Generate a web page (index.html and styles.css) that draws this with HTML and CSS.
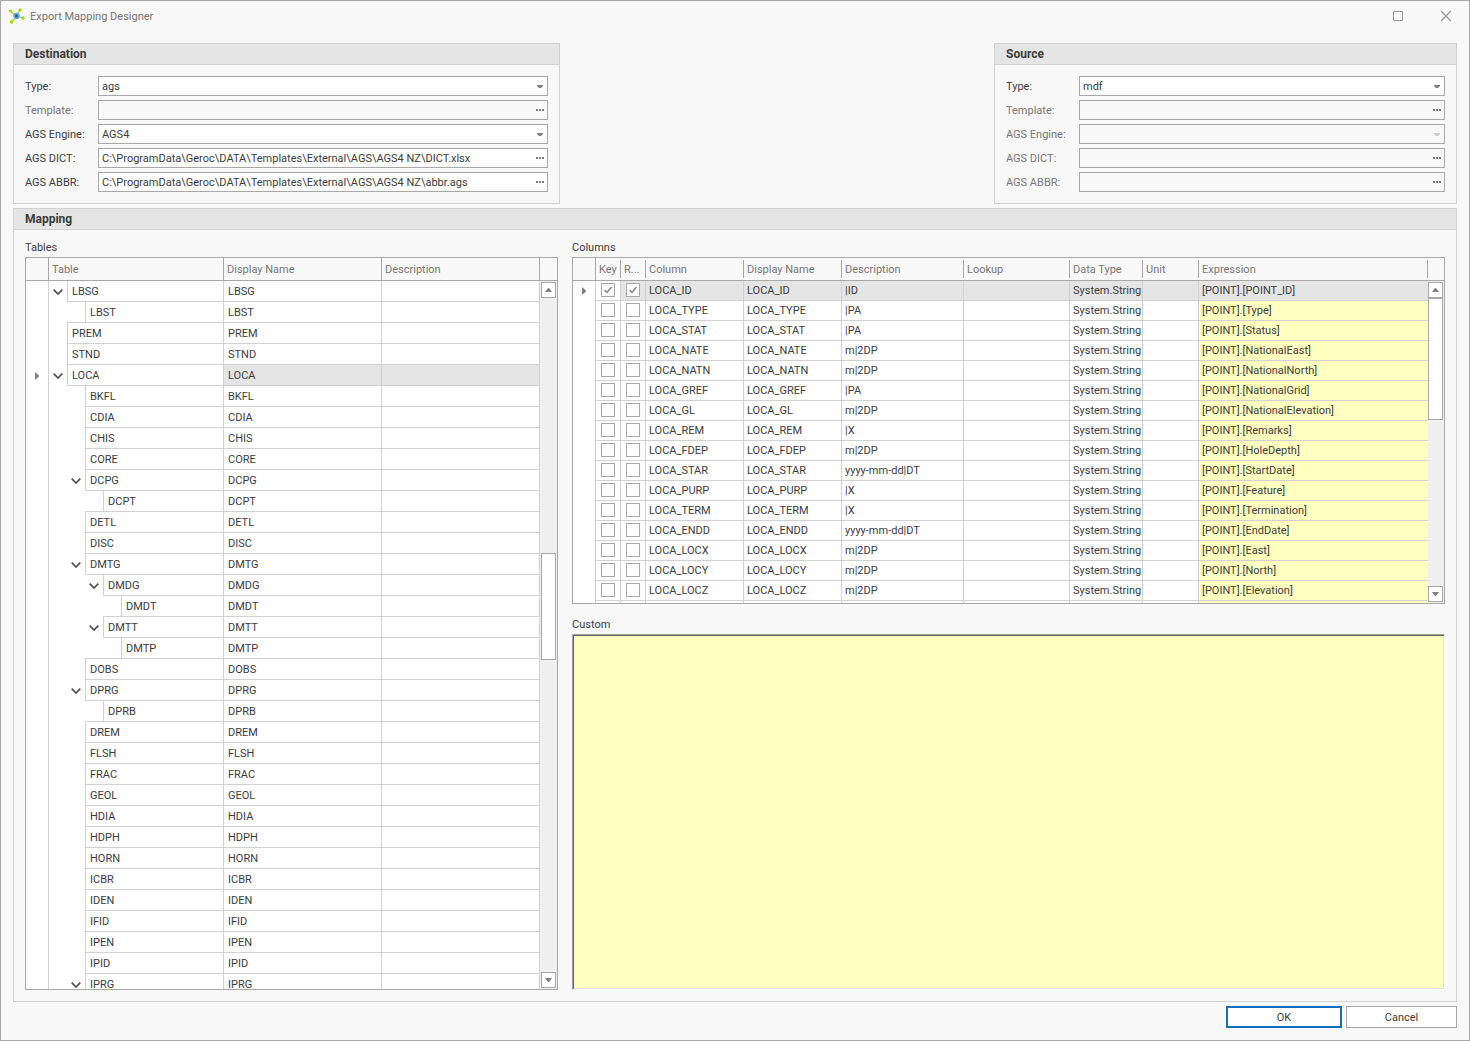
FILE: index.html
```html
<!DOCTYPE html>
<html lang="en">
<head>
<meta charset="utf-8">
<title>Export Mapping Designer</title>
<link rel="stylesheet" href="styles.css">
</head>
<body>
<svg class="defs" aria-hidden="true">
  <symbol id="caret" viewBox="0 0 6 3"><path d="M0 0h6v1L4 3H2L0 1z" fill="currentColor"/></symbol>
  <symbol id="dots" viewBox="0 0 8 2"><path d="M0 0h2v2H0zM3 0h2v2H3zM6 0h2v2H6z" fill="currentColor"/></symbol>
  <symbol id="up" viewBox="0 0 7 4"><path d="M3 0h1l3 4H0z" fill="currentColor"/></symbol>
  <symbol id="down" viewBox="0 0 7 4"><path d="M0 0h7L4 4H3z" fill="currentColor"/></symbol>
  <symbol id="pointer" viewBox="0 0 4 8"><path d="M0 0l4 3.5v1L0 8z" fill="currentColor"/></symbol>
  <symbol id="chevron" viewBox="0 0 10 6"><path d="M0.7 0.7L5 5l4.3-4.3" fill="none" stroke="currentColor" stroke-width="1.7"/></symbol>
</svg>

<header class="titlebar">
  <svg class="logo" viewBox="0 0 16 16" aria-hidden="true">
    <path d="M2 3.5l5 4M11 2L8 7M14 10L8 8M2.500 14L7 9" stroke="#a3cc1f" stroke-width="1.3"/>
    <circle cx="7.500" cy="8" r="3.200" fill="#6fa8dc"/>
    <circle cx="7.500" cy="8" r="1.700" fill="#1f66ad"/>
    <g fill="#a6d60a"><circle cx="1.700" cy="3" r="1.600"/><circle cx="11" cy="2" r="1.700"/><circle cx="14" cy="10" r="1.700"/><circle cx="2.500" cy="14" r="1.800"/></g>
  </svg>
  <h1>Export Mapping Designer</h1>
  <button class="win" aria-label="Maximize"><svg width="12" height="12" viewBox="0 0 12 12"><path d="M1.500 1.500h9v9h-9z" fill="none" stroke="#999"/></svg></button>
  <button class="win" aria-label="Close"><svg width="12" height="12" viewBox="0 0 12 12"><path d="M1 1l10 10M11 1L1 11" fill="none" stroke="#999" stroke-width="1.300"/></svg></button>
</header>

<form class="content">
  <div class="top">
    <section class="panel">
      <h2>Destination</h2>
      <div class="fields">
        <label for="d-type">Type:</label>
        <div class="field"><select id="d-type"><option>ags</option></select><svg class="caret"><use href="#caret"/></svg></div>
        <label for="d-template" class="off">Template:</label>
        <div class="field off"><input id="d-template" type="text" disabled><button type="button" disabled aria-label="Browse template"><svg class="dots"><use href="#dots"/></svg></button></div>
        <label for="d-engine">AGS Engine:</label>
        <div class="field"><select id="d-engine"><option>AGS4</option></select><svg class="caret"><use href="#caret"/></svg></div>
        <label for="d-dict">AGS DICT:</label>
        <div class="field"><input id="d-dict" type="text" value="C:\ProgramData\Geroc\DATA\Templates\External\AGS\AGS4 NZ\DICT.xlsx"><button type="button" aria-label="Browse dictionary"><svg class="dots"><use href="#dots"/></svg></button></div>
        <label for="d-abbr">AGS ABBR:</label>
        <div class="field"><input id="d-abbr" type="text" value="C:\ProgramData\Geroc\DATA\Templates\External\AGS\AGS4 NZ\abbr.ags"><button type="button" aria-label="Browse abbreviations"><svg class="dots"><use href="#dots"/></svg></button></div>
      </div>
    </section>
    <section class="panel source">
      <h2>Source</h2>
      <div class="fields">
        <label for="s-type">Type:</label>
        <div class="field"><select id="s-type"><option>mdf</option></select><svg class="caret"><use href="#caret"/></svg></div>
        <label for="s-template" class="off">Template:</label>
        <div class="field off"><input id="s-template" type="text" disabled><button type="button" disabled aria-label="Browse template"><svg class="dots"><use href="#dots"/></svg></button></div>
        <label for="s-engine" class="off">AGS Engine:</label>
        <div class="field off"><select id="s-engine" disabled></select><svg class="caret"><use href="#caret"/></svg></div>
        <label for="s-dict" class="off">AGS DICT:</label>
        <div class="field off"><input id="s-dict" type="text" disabled><button type="button" disabled aria-label="Browse dictionary"><svg class="dots"><use href="#dots"/></svg></button></div>
        <label for="s-abbr" class="off">AGS ABBR:</label>
        <div class="field off"><input id="s-abbr" type="text" disabled><button type="button" disabled aria-label="Browse abbreviations"><svg class="dots"><use href="#dots"/></svg></button></div>
      </div>
    </section>
  </div>

  <section class="panel mapping">
    <h2>Mapping</h2>
    <div class="panes">
      <div class="pane">
        <h3 id="tables-label">Tables</h3>
        <div class="grid tree">
          <div class="view">
            <table aria-labelledby="tables-label">
              <colgroup><col class="c-ind"><col class="c-table"><col class="c-name"><col></colgroup>
              <thead><tr><th></th><th>Table</th><th>Display Name</th><th>Description</th></tr></thead>
              <tbody id="tables"></tbody>
            </table>
          </div>
          <div class="scroll">
            <div class="track">
              <button type="button" aria-label="Scroll up"><svg><use href="#up"/></svg></button>
              <div class="before"></div><div class="thumb"></div><div class="after"></div>
              <button type="button" aria-label="Scroll down"><svg><use href="#down"/></svg></button>
            </div>
          </div>
        </div>
      </div>
      <div class="pane">
        <h3 id="columns-label">Columns</h3>
        <div class="grid columns">
          <div class="view">
            <table aria-labelledby="columns-label">
              <colgroup><col class="c-ind"><col class="c-check"><col class="c-check"><col class="c-col"><col class="c-col"><col class="c-desc"><col class="c-lookup"><col class="c-type"><col class="c-unit"><col></colgroup>
              <thead><tr><th></th><th>Key</th><th>R...</th><th>Column</th><th>Display Name</th><th>Description</th><th>Lookup</th><th>Data Type</th><th>Unit</th><th>Expression</th></tr></thead>
              <tbody id="columns"></tbody>
            </table>
          </div>
          <div class="scroll">
            <div class="track">
              <button type="button" aria-label="Scroll up"><svg><use href="#up"/></svg></button>
              <div class="thumb"></div><div class="after"></div>
              <button type="button" aria-label="Scroll down"><svg><use href="#down"/></svg></button>
            </div>
          </div>
        </div>
        <label class="custom-label" for="custom">Custom</label>
        <textarea id="custom"></textarea>
      </div>
    </div>
  </section>

  <footer class="actions">
    <button type="button" class="primary">OK</button>
    <button type="button">Cancel</button>
  </footer>
</form>
<script src="app.js"></script>
</body>
</html>
```
FILE: styles.css
```css
:root {
  --bg: #f8f8f8;
  --head: #e5e5e5;
  --line: #d1d1d1;
  --edge: #a8a8a8;
  --text: #3c3c3c;
  --muted: #777;
  --yellow: #ffffc0;
}

* { box-sizing: border-box; }

body {
  margin: 0;
  height: 100vh;
  display: flex;
  flex-direction: column;
  border: 1px solid var(--edge);
  background: var(--bg);
  color: var(--text);
  font: 11px/14px Roboto, "Liberation Sans", sans-serif;
}

h1, h2, h3 { margin: 0; font: inherit; }
button, input, select, textarea { font: inherit; color: inherit; margin: 0; padding: 0; border: 0; border-radius: 0; background: none; }
svg { display: block; }
.defs { position: absolute; width: 0; height: 0; }

.titlebar {
  display: flex;
  align-items: center;
  height: 30px;
  padding: 0 17px 0 8px;
  color: var(--muted);
}
.logo { width: 16px; height: 16px; margin-right: 5px; }
.titlebar h1 { flex: 1; padding-top: 2px; }
.win { width: 12px; margin-left: 36px; }

.content {
  flex: 1;
  min-height: 0;
  display: flex;
  flex-direction: column;
  padding: 12px;
}

.top { display: grid; grid-template-columns: 547fr 434fr 463fr; margin-bottom: 4px; }
.source { grid-column: 3; }

.panel { border: 1px solid var(--line); }
.panel h2 {
  padding: 0 11px;
  border-bottom: 1px solid var(--line);
  background: var(--head);
  font-size: 12px;
  line-height: 20px;
  font-weight: 700;
}

.fields {
  display: grid;
  grid-template-columns: 73px 1fr;
  grid-auto-rows: 20px;
  row-gap: 4px;
  padding: 11px;
}
.fields label { padding-top: 1px; line-height: 20px; }
label.off { color: var(--muted); }
.field {
  position: relative;
  display: flex;
  height: 20px;
  border: 1px solid var(--edge);
  background: #fff;
}
.field.off { background: var(--bg); }
.field input, .field select { flex: 1; min-width: 0; padding: 2px 0 0 3px; appearance: none; outline: 0; opacity: 1; }
.field button { width: 15px; color: #808080; }
.dots { width: 8px; height: 2px; margin-left: 4px; }
.caret { position: absolute; right: 4px; top: 8px; width: 6px; height: 3px; color: #808080; pointer-events: none; }
.field.off .caret { color: #ccc; }

.mapping { flex: 1; min-height: 0; display: flex; flex-direction: column; margin-bottom: 4px; }
.panes {
  flex: 1;
  min-height: 0;
  display: grid;
  grid-template-columns: 533fr 873fr;
  grid-template-rows: minmax(0, 1fr);
  column-gap: 14px;
  padding: 11px;
}
.pane { display: flex; flex-direction: column; min-width: 0; min-height: 0; }
.pane h3, .custom-label { margin-bottom: 2px; }
.custom-label { margin-top: 14px; }

.grid { display: flex; min-height: 0; border: 1px solid var(--edge); }
.tree { flex: 1; }
.columns { flex: 347 1 0; }
.view { flex: 1; min-width: 0; overflow: hidden; background: #fff; }

table { width: 100%; table-layout: fixed; border-collapse: separate; border-spacing: 0; }
th, td { padding: 0; white-space: nowrap; overflow: hidden; text-align: left; }
th {
  height: 23px;
  padding: 1px 0 0 3px;
  border-bottom: 1px solid var(--edge);
  background: var(--bg);
  color: var(--muted);
  font-weight: 400;
}
td { border-right: 1px solid var(--line); border-bottom: 1px solid var(--line); }
td:first-child { padding-left: 9px; border-bottom: 0; }
th:first-child, .tree th { border-right: 1px solid var(--edge); }
.pointer { width: 4px; height: 8px; color: #808080; }
.selected td { background: var(--head); }
.selected td:first-child, .selected td:nth-child(2) { background: #fff; }

.c-ind { width: 23px; }
.c-table { width: 175px; }
.c-name { width: 158px; }
.c-check { width: 25px; }
.c-col { width: 98px; }
.c-desc { width: 122px; }
.c-lookup { width: 106px; }
.c-type { width: 73px; }
.c-unit { width: 56px; }

.tree td { height: 21px; line-height: 18px; }
.tree td:nth-child(2) { padding: 0; border-bottom: 0; overflow: visible; }
.tree td:nth-child(3) { padding: 2px 0 0 4px; }
.branch { display: flex; height: 21px; }
.depth-1 { padding-left: 18px; }
.depth-2 { padding-left: 36px; }
.depth-3 { padding-left: 54px; }
.toggle { flex: none; width: 18px; padding-left: 4px; color: #505050; }
.toggle svg { width: 10px; height: 6px; }
.node {
  flex: 1;
  height: 22px;
  margin-top: -1px;
  padding: 2px 0 0 4px;
  border: 1px solid var(--line);
  border-right: 0;
}
tr:first-child .node { height: 21px; margin-top: 0; border-top: 0; }

.columns td { height: 20px; line-height: 19px; }
.columns td:not(:first-child) { padding-left: 3px; }
.columns th:not(:first-child) { background: linear-gradient(var(--edge), var(--edge)) right center / 1px 18px no-repeat var(--bg); }
.columns td:nth-child(2), .columns td:nth-child(3) { padding: 2px 0 0 5px; vertical-align: top; }
.columns td:last-child { border-right: 0; }
.columns tr:not(.selected) td:last-child { background: var(--yellow); }
.columns input {
  display: block;
  appearance: none;
  width: 14px;
  height: 14px;
  border: 1px solid var(--edge);
  background: #fff;
}
.tick { position: relative; display: block; width: 14px; height: 14px; }
.tick svg { position: absolute; left: 3px; top: 3px; width: 8px; height: 8px; pointer-events: none; }

.scroll { display: flex; flex-direction: column; width: 17px; padding-top: 22px; }
.columns .scroll { width: 16px; }
.track {
  flex: 1;
  display: flex;
  flex-direction: column;
  padding: 1px;
  border-top: 1px solid var(--edge);
  background: #f0f0f0;
}
.columns .track { padding-left: 0; }
.track button { flex: none; height: 16px; padding-left: 3px; border: 1px solid var(--edge); background: #fff; color: #808080; }
.track button svg { width: 7px; height: 4px; }
.thumb { border: 1px solid var(--edge); background: #fff; }
.tree .before { flex: 255; }
.tree .thumb { flex: 105; }
.tree .after { flex: 312; }
.columns .thumb { flex: 121; }
.columns .after { flex: 167; }

textarea {
  flex: 352 1 0;
  min-height: 0;
  resize: none;
  outline: 0;
  padding: 2px;
  border: 1px solid;
  border-color: #a0a0a0 #fff #fff #a0a0a0;
  background: var(--yellow);
  box-shadow: inset 1px 1px #696969, inset -1px -1px #e3e3e3;
}

.actions { display: flex; justify-content: flex-end; gap: 4px; }
.actions button { width: 111px; height: 22px; padding-top: 1px; border: 1px solid var(--edge); background: #fff; }
.actions .primary { width: 116px; border: 2px solid #1070bf; }
```
FILE: app.js
```js
// Tree rows: name, depth, has children
const tables = [
  ["LBSG", 0, 1], ["LBST", 1], ["PREM", 0], ["STND", 0], ["LOCA", 0, 1],
  ["BKFL", 1], ["CDIA", 1], ["CHIS", 1], ["CORE", 1], ["DCPG", 1, 1],
  ["DCPT", 2], ["DETL", 1], ["DISC", 1], ["DMTG", 1, 1], ["DMDG", 2, 1],
  ["DMDT", 3], ["DMTT", 2, 1], ["DMTP", 3], ["DOBS", 1], ["DPRG", 1, 1],
  ["DPRB", 2], ["DREM", 1], ["FLSH", 1], ["FRAC", 1], ["GEOL", 1],
  ["HDIA", 1], ["HDPH", 1], ["HORN", 1], ["ICBR", 1], ["IDEN", 1],
  ["IFID", 1], ["IPEN", 1], ["IPID", 1], ["IPRG", 1, 1]
];

// Column rows: name, description, mapped expression
const columns = [
  ["LOCA_ID", "|ID", "POINT_ID"], ["LOCA_TYPE", "|PA", "Type"],
  ["LOCA_STAT", "|PA", "Status"], ["LOCA_NATE", "m|2DP", "NationalEast"],
  ["LOCA_NATN", "m|2DP", "NationalNorth"], ["LOCA_GREF", "|PA", "NationalGrid"],
  ["LOCA_GL", "m|2DP", "NationalElevation"], ["LOCA_REM", "|X", "Remarks"],
  ["LOCA_FDEP", "m|2DP", "HoleDepth"], ["LOCA_STAR", "yyyy-mm-dd|DT", "StartDate"],
  ["LOCA_PURP", "|X", "Feature"], ["LOCA_TERM", "|X", "Termination"],
  ["LOCA_ENDD", "yyyy-mm-dd|DT", "EndDate"], ["LOCA_LOCX", "m|2DP", "East"],
  ["LOCA_LOCY", "m|2DP", "North"], ["LOCA_LOCZ", "m|2DP", "Elevation"]
];

const pointer = '<svg class="pointer"><use href="#pointer"/></svg>';

document.getElementById("tables").innerHTML = tables.map(([name, depth, parent]) => {
  const selected = name === "LOCA";
  const toggle = parent
    ? `<button type="button" class="toggle" aria-label="Collapse ${name}"><svg><use href="#chevron"/></svg></button>`
    : '<span class="toggle"></span>';
  return `<tr${selected ? ' class="selected"' : ""}><td>${selected ? pointer : ""}</td>` +
    `<td><div class="branch depth-${depth}">${toggle}<span class="node">${name}</span></div></td>` +
    `<td>${name}</td><td></td></tr>`;
}).join("");

const box = (label, on) => `<span class="tick"><input type="checkbox" aria-label="${label}"${on ? " checked" : ""}>` +
  (on ? '<svg viewBox="0 0 8 8"><path d="M0.500 4l2.500 2.500L7.500 1" fill="none" stroke="#808080" stroke-width="1.500"/></svg>' : "") + "</span>";

document.getElementById("columns").innerHTML = columns.map(([name, desc, expr], i) =>
  `<tr${i ? "" : ' class="selected"'}><td>${i ? "" : pointer}</td>` +
  `<td>${box(name + " key", !i)}</td><td>${box(name + " required", !i)}</td>` +
  `<td>${name}</td><td>${name}</td><td>${desc}</td><td></td><td>System.String</td><td></td>` +
  `<td>[POINT].[${expr}]</td></tr>`
).join("") + `<tr>${"<td></td>".repeat(10)}</tr>`;
```
